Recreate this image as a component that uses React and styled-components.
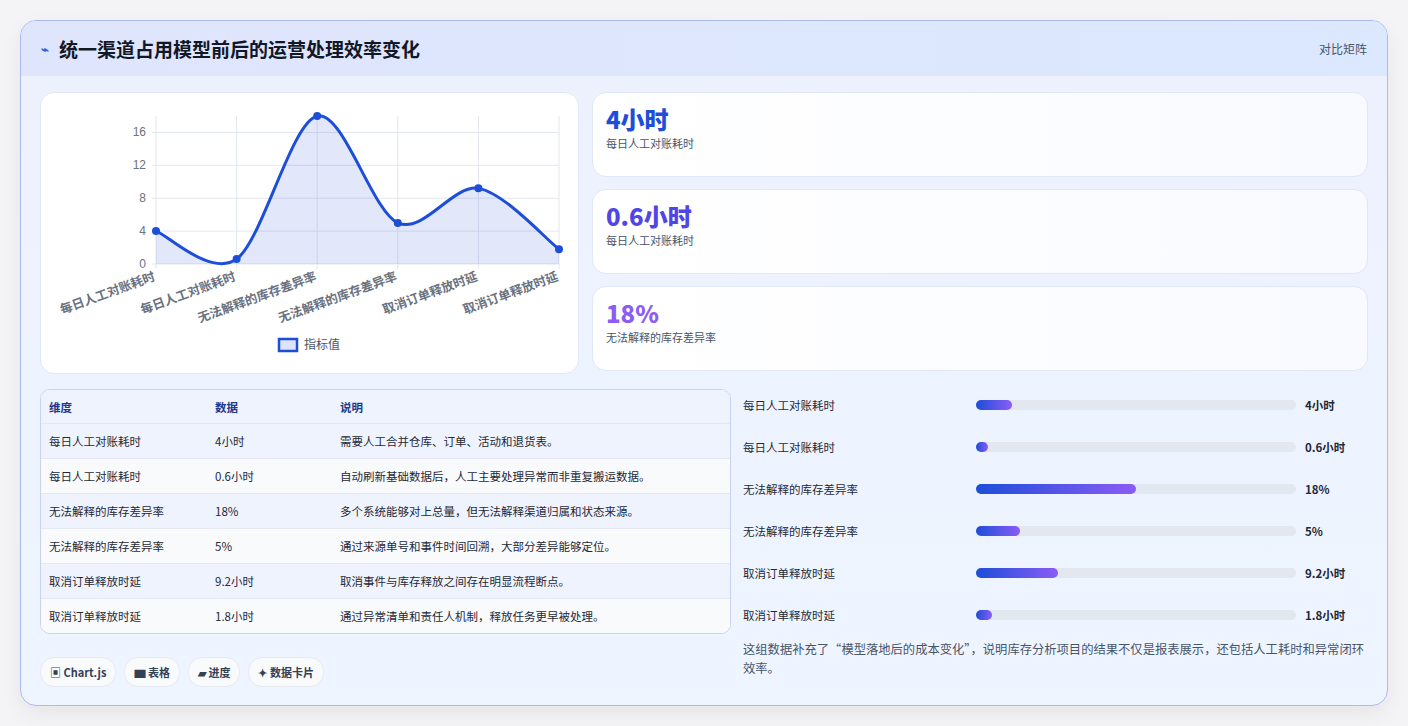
import React from "react";
import styled, { createGlobalStyle } from "styled-components";

const G = createGlobalStyle`
  body{margin:0;background:#f4f4f6;font-family:"Noto Sans CJK SC","Noto Sans",sans-serif;}
`;
const Page = styled.div`padding:20px 20px 21px 20px;`;
const Card = styled.div`
  border:1px solid #aeb9f0;border-radius:16px;overflow:hidden;
  background:linear-gradient(180deg,#edf1fe,#eef5ff);
  box-shadow:0 8px 20px rgba(0,0,0,0.06);
`;
const Header = styled.div`
  height:55px;display:flex;align-items:center;justify-content:space-between;
  padding:0 20px;background:linear-gradient(90deg,#dfe5fd,#dbe8fe);
`;
const Title = styled.h1`margin:0;font-size:19px;font-weight:700;color:#111827;display:flex;align-items:center;gap:10px;`;
const Tag = styled.span`font-size:12px;color:#475569;`;
const Body = styled.div`padding:16px 19px 18px 19px;display:flex;flex-direction:column;gap:15px;`;
const Row = styled.div`display:grid;grid-template-columns:${p=>p.cols};gap:${p=>p.gap}px;align-items:start;`;
const White = styled.div`background:#fff;border:1px solid #e1e7f5;border-radius:14px;`;
const Stats = styled.div`display:flex;flex-direction:column;gap:12px;`;
const Stat = styled.div`
  height:85px;box-sizing:border-box;padding:10px 13px;border:1px solid #e1e7f5;border-radius:14px;
  background:linear-gradient(90deg,#fff,#f8faff);
`;
const SVal = styled.div`font-size:24px;font-weight:800;color:${p=>p.c};line-height:32px;`;
const SLab = styled.div`font-size:11px;color:#475569;`;
const Left = styled.div`display:flex;flex-direction:column;align-items:flex-start;`;
const Table = styled.div`align-self:stretch;border:1px solid #c9d3ef;border-radius:10px;overflow:hidden;background:#fff;`;
const TR = styled.div`
  display:grid;grid-template-columns:166px 125px 1fr;height:${p=>p.h}px;align-items:center;padding-left:8px;
  background:${p=>p.bg};border-top:${p=>p.first?"none":"1px solid #e3e8f4"};
  font-size:11.5px;color:${p=>p.head?"#1e3a8a":"#1f2937"};font-weight:${p=>p.head?700:400};
`;
const Bars = styled.div`display:flex;flex-direction:column;margin-top:-5px;`;
const BarRow = styled.div`display:grid;grid-template-columns:233px 320px 1fr;align-items:center;height:42px;font-size:11.5px;color:#1f2937;`;
const Track = styled.div`height:10px;border-radius:5px;background:#e3e7ef;`;
const Fill = styled.div`height:10px;border-radius:5px;background:linear-gradient(90deg,#1d4ed8,#8b5cf6);`;
const BVal = styled.span`padding-left:9px;font-weight:700;`;
const Note = styled.p`margin:4px 0 0;font-size:12.3px;line-height:19px;color:#475569;`;
const Chips = styled.div`display:flex;gap:8px;margin-top:23px;`;
const Chip = styled.span`font-size:11px;color:#334155;font-weight:600;background:#f8fafc;border:1px solid #e5e9f2;border-radius:14px;padding:6px 9px;`;

const vals=[4,0.6,18,5,9.2,1.8];
const labs=["每日人工对账耗时","每日人工对账耗时","无法解释的库存差异率","无法解释的库存差异率","取消订单释放时延","取消订单释放时延"];
const X0=115,W=403,Y0=171,H=148;
const pts=vals.map((v,i)=>[X0+i*W/5,Y0-v*H/18]);
function path(){
  let d=`M${pts[0][0]},${pts[0][1]}`;const t=0.16;
  for(let i=0;i<pts.length-1;i++){
    const p0=pts[i-1]||pts[i],p1=pts[i],p2=pts[i+1],p3=pts[i+2]||p2;
    const c1=[p1[0]+(p2[0]-p0[0])*t,p1[1]+(p2[1]-p0[1])*t];
    const c2=[p2[0]-(p3[0]-p1[0])*t,p2[1]-(p3[1]-p1[1])*t];
    d+=` C${c1[0]},${c1[1]} ${c2[0]},${c2[1]} ${p2[0]},${p2[1]}`;
  }
  return d;
}
function Chart(){
  const d=path();
  return <svg width="538" height="280" style={{display:"block"}}>
    {[0,4,8,12,16].map(v=>{const y=Y0-v*H/18;return <g key={v}><line x1={X0-4} x2={X0+W} y1={y} y2={y} stroke="#e2e6ee"/><text x={X0-10} y={y+4} fontSize="12" fill="#6b7280" textAnchor="end" fontFamily="Liberation Sans">{v}</text></g>})}
    {pts.map((p,i)=><line key={i} x1={p[0]} x2={p[0]} y1={Y0-H} y2={Y0+5} stroke="#e2e6ee"/>)}
    <path d={`${d} L${X0+W},${Y0} L${X0},${Y0} Z`} fill="rgba(29,78,216,0.13)"/>
    <path d={d} fill="none" stroke="#1d4ed8" strokeWidth="3"/>
    {pts.map((p,i)=><circle key={i} cx={p[0]} cy={p[1]} r="4" fill="#1d4ed8"/>)}
    {pts.map((p,i)=><text key={"l"+i} x={p[0]} y={Y0+16} fontSize="12.5" fontWeight="700" fill="#6b7280" textAnchor="end" transform={`rotate(-20 ${p[0]} ${Y0+16})`}>{labs[i]}</text>)}
    <rect x="238" y="246" width="18" height="12" fill="#dde4f7" stroke="#1d4ed8" strokeWidth="2.5"/>
    <text x="263" y="256" fontSize="12" fill="#4b5563">指标值</text>
  </svg>;
}
const rows=[["每日人工对账耗时","4小时","需要人工合并仓库、订单、活动和退货表。"],["每日人工对账耗时","0.6小时","自动刷新基础数据后，人工主要处理异常而非重复搬运数据。"],["无法解释的库存差异率","18%","多个系统能够对上总量，但无法解释渠道归属和状态来源。"],["无法解释的库存差异率","5%","通过来源单号和事件时间回溯，大部分差异能够定位。"],["取消订单释放时延","9.2小时","取消事件与库存释放之间存在明显流程断点。"],["取消订单释放时延","1.8小时","通过异常清单和责任人机制，释放任务更早被处理。"]];

export default function App(){
  return <Page><G/><Card>
    <Header><Title><span style={{color:"#2563eb",fontSize:13}}>⌁</span>统一渠道占用模型前后的运营处理效率变化</Title><Tag>对比矩阵</Tag></Header>
    <Body>
      <Row cols="539px 1fr" gap={13}>
        <White style={{height:280}}><Chart/></White>
        <Stats>
          <Stat><SVal c="#1d4ed8">4小时</SVal><SLab>每日人工对账耗时</SLab></Stat>
          <Stat><SVal c="#4f46e5">0.6小时</SVal><SLab>每日人工对账耗时</SLab></Stat>
          <Stat><SVal c="#8b5cf6">18%</SVal><SLab>无法解释的库存差异率</SLab></Stat>
        </Stats>
      </Row>
      <Row cols="691px 1fr" gap={12}>
        <Left>
          <Table>
            <TR head first h={33} bg="#eef3fe"><span>维度</span><span>数据</span><span>说明</span></TR>
            {rows.map((r,i)=><TR key={i} h={34} bg={i%2?"#f8fafc":"#eff3fd"}><span>{r[0]}</span><span>{r[1]}</span><span>{r[2]}</span></TR>)}
          </Table>
          <Chips><Chip>▣ Chart.js</Chip><Chip>▆ 表格</Chip><Chip>▰ 进度</Chip><Chip>✦ 数据卡片</Chip></Chips>
        </Left>
        <div>
          <Bars>
            {rows.map((r,i)=>{const v=parseFloat(r[1]);return <BarRow key={i}><span>{r[0]}</span><Track><Fill style={{width:Math.max(12,v/36*320)}}/></Track><BVal>{r[1]}</BVal></BarRow>})}
          </Bars>
          <Note>这组数据补充了“模型落地后的成本变化”，说明库存分析项目的结果不仅是报表展示，还包括人工耗时和异常闭环效率。</Note>
        </div>
      </Row>
    </Body>
  </Card></Page>;
}
